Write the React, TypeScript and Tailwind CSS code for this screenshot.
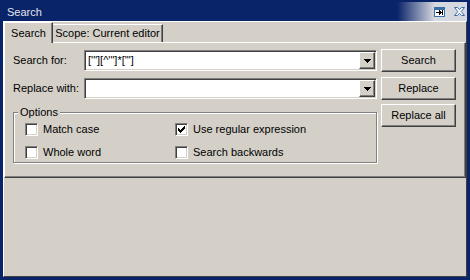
const raised =
  "border border-t-white border-l-white border-r-[#404040] border-b-[#404040] shadow-[inset_-1px_-1px_0_#808080]";
const sunken =
  "border border-t-[#808080] border-l-[#808080] border-r-white border-b-white shadow-[inset_1px_1px_0_#404040,inset_-1px_-1px_0_#d4d0c8]";

function Combo({ value }: { value?: string }) {
  return (
    <div className={`flex-1 h-[21px] bg-white flex items-center p-[1px] ${sunken}`}>
      <span className="flex-1 pl-[2px] text-black whitespace-pre">{value}</span>
      <div className={`w-[16px] h-[17px] bg-[#d4d0c8] flex items-center justify-center ${raised}`}>
        <svg width="7" height="4" viewBox="0 0 7 4" shapeRendering="crispEdges">
          <path d="M0 0h7v1h-1v1h-1v1h-1v1h-1v-1h-1v-1h-1v-1h-1z" fill="#000" />
        </svg>
      </div>
    </div>
  );
}

function Btn({ children, className = "" }: { children: React.ReactNode; className?: string }) {
  return (
    <button className={`w-[75px] h-[23px] bg-[#d4d0c8] text-black leading-[13px] ${raised} ${className}`}>
      {children}
    </button>
  );
}

function Check({ label, checked }: { label: string; checked?: boolean }) {
  return (
    <div className="flex items-center gap-[5px] h-[18px]">
      <div className={`w-[13px] h-[13px] bg-white flex-none ${sunken}`}>
        {checked && (
          <svg width="11" height="11" viewBox="0 0 11 11" shapeRendering="crispEdges">
            <path
              d="M8 2h1v1h-1z M7 3h2v1h-2z M2 4h1v1h-1z M6 4h3v1h-3z M2 5h2v1h-2z M5 5h3v1h-3z M2 6h5v1h-5z M3 7h3v1h-3z M4 8h1v1h-1z"
              fill="#000"
            />
          </svg>
        )}
      </div>
      <span>{label}</span>
    </div>
  );
}

export default function App() {
  return (
    <div className="w-[470px] h-[280px] bg-[#0a246a] pt-[2px] pl-[3px] pr-[3px] pb-[3px] flex flex-col text-[11px] leading-[13px] text-black [font-family:'Liberation_Sans',Arial,sans-serif]">
      {/* title bar */}
      <div className="h-[19px] flex-none flex items-center justify-between pl-[4px] pr-[1px] bg-[linear-gradient(90deg,#0a246a_85%,#d6d8e0_93%)]">
        <span className="mt-[2px] text-[#e4e4ec]">Search</span>
        <div className="flex items-center gap-[8px]">
          <svg width="11" height="10" viewBox="0 0 11 10" shapeRendering="crispEdges">
            <rect x="0.5" y="0.5" width="10" height="9" fill="#fff" stroke="#3a6ea5" />
            <rect x="1" y="1" width="9" height="2" fill="#3a6ea5" />
            <path d="M2 5h5v1h-5z M5 3h1v5h-1z M6 4h1v3h-1z M7 5h1v1h-1z M8 3h1v5h-1z" fill="#000" />
          </svg>
          <svg width="13" height="11" viewBox="0 0 13 11">
            <path
              d="M1.5 1.5h3l2 2.2 2-2.2h3l-3.3 4 3.3 4h-3l-2-2.2-2 2.2h-3l3.3-4z"
              fill="#fff"
              stroke="#3a6ea5"
              strokeWidth="1"
            />
          </svg>
        </div>
      </div>

      {/* body */}
      <div className="flex-1 flex flex-col bg-[#d4d0c8] border border-t-white border-l-white border-r-[#404040] border-b-[#404040]">
        {/* tabs */}
        <div className="h-[20px] flex-none flex items-end">
          <div className="relative z-10 -mb-[1px] w-[49px] h-[21px] flex items-center justify-center bg-[#d4d0c8] border-t border-l border-r border-t-white border-l-white border-r-[#404040] shadow-[inset_-1px_0_0_#808080]">
            Search
          </div>
          <div className="w-[110px] h-[18px] flex items-center justify-center bg-[#d4d0c8] border-t border-r border-t-white border-r-[#404040] shadow-[inset_-1px_0_0_#808080]">
            Scope: Current editor
          </div>
        </div>

        {/* panel */}
        <div className={`h-[136px] flex-none flex gap-[4px] pl-[8px] pt-[6px] pr-[9px] bg-[#d4d0c8] ${raised}`}>
          <div className="flex-1 flex flex-col">
            <div className="h-[23px] flex items-center">
              <span className="w-[71px]">Search for:</span>
              <Combo value={`['"][^'"]*['"]`} />
            </div>
            <div className="h-[23px] mt-[5px] flex items-center">
              <span className="w-[71px]">Replace with:</span>
              <Combo />
            </div>
            <fieldset className="mt-[6px] border border-[#808080] shadow-[inset_1px_1px_0_#fff,1px_1px_0_#fff] pl-[11px] pb-[1px]">
              <legend className="-ml-[7px] px-[2px] bg-[#d4d0c8] leading-[13px]">Options</legend>
              <div className="grid grid-cols-[150px_1fr] gap-y-[5px] mt-[1px]">
                <Check label="Match case" />
                <Check label="Use regular expression" checked />
                <Check label="Whole word" />
                <Check label="Search backwards" />
              </div>
            </fieldset>
          </div>
          <div className="w-[75px] flex flex-col">
            <Btn>Search</Btn>
            <Btn className="mt-[5px]">Replace</Btn>
            <Btn className="mt-[4px]">Replace all</Btn>
          </div>
        </div>

        <div className="flex-1" />
      </div>
    </div>
  );
}
